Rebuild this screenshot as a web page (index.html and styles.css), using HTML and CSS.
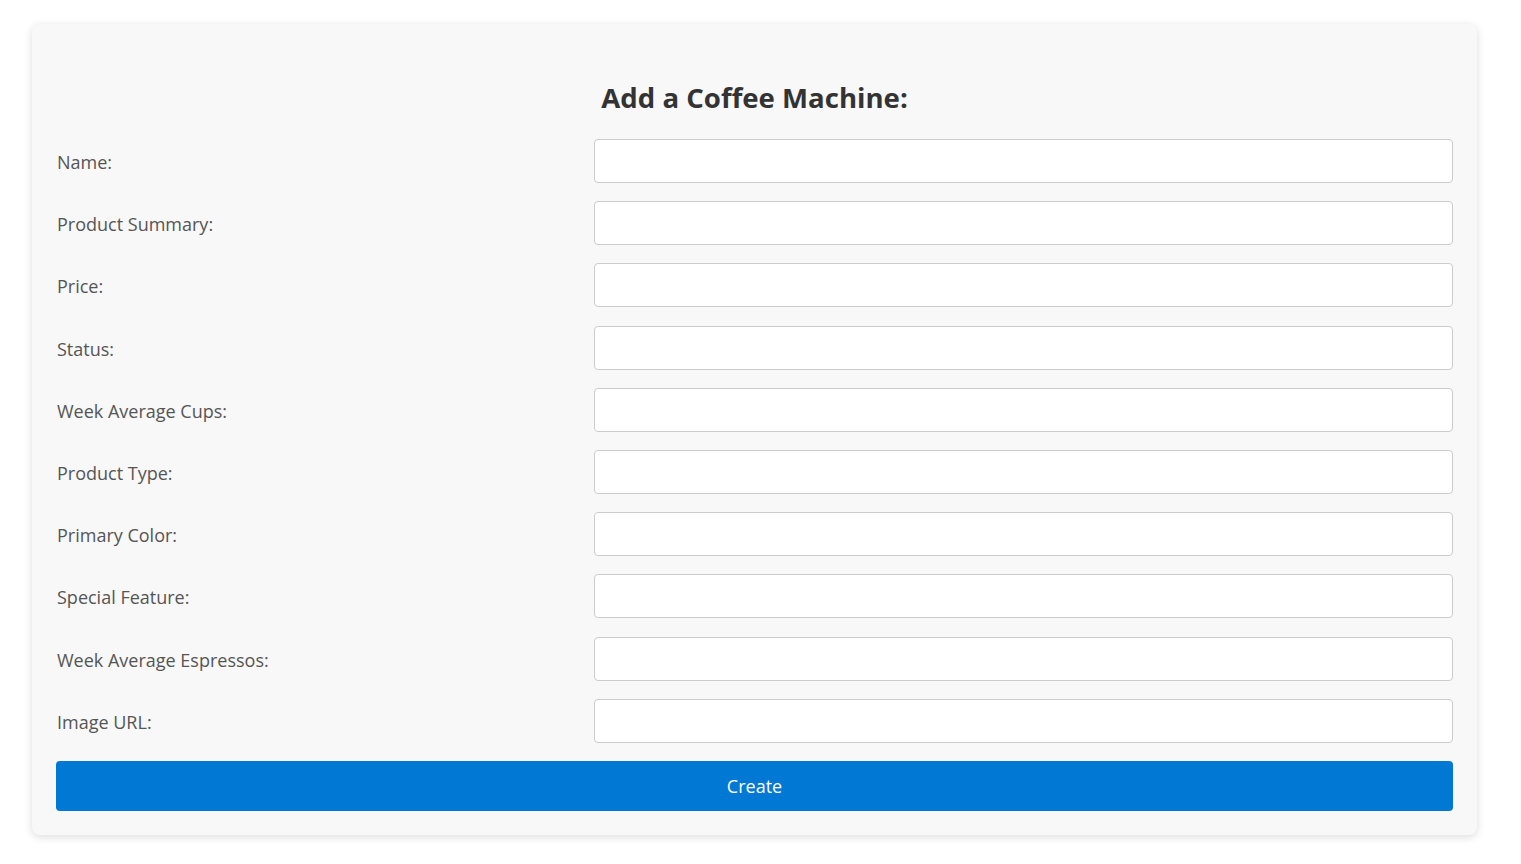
FILE: index.html
```html
<!DOCTYPE html>
<html lang="en">
<head>
<meta charset="utf-8">
<title>Add a Coffee Machine</title>
<link rel="stylesheet" href="styles.css">
</head>
<body>
<div class="page">
  <form class="card">
    <h2 class="title">Add a Coffee Machine:</h2>
    <div class="rows">
      <div class="row"><label class="label">Name:</label><input class="input" type="text"></div>
      <div class="row"><label class="label">Product Summary:</label><input class="input" type="text"></div>
      <div class="row"><label class="label">Price:</label><input class="input" type="text"></div>
      <div class="row"><label class="label">Status:</label><input class="input" type="text"></div>
      <div class="row"><label class="label">Week Average Cups:</label><input class="input" type="text"></div>
      <div class="row"><label class="label">Product Type:</label><input class="input" type="text"></div>
      <div class="row"><label class="label">Primary Color:</label><input class="input" type="text"></div>
      <div class="row"><label class="label">Special Feature:</label><input class="input" type="text"></div>
      <div class="row"><label class="label">Week Average Espressos:</label><input class="input" type="text"></div>
      <div class="row"><label class="label">Image URL:</label><input class="input" type="text"></div>
      <button class="button" type="button">Create</button>
    </div>
  </form>
</div>
</body>
</html>
```
FILE: styles.css
```css
html, body {
  margin: 0;
  padding: 0;
  background: #ffffff;
}
body {
  font-family: "Open Sans", "Noto Sans", sans-serif;
}
.page {
  padding: 24px 44px 30px 32px;
}
.card {
  background: #f8f8f8;
  border-radius: 8px;
  box-shadow: 0 2px 8px rgba(0, 0, 0, 0.14);
  padding: 32px 24px 24px 24px;
  display: flex;
  flex-direction: column;
}
.title {
  margin: 24px 0 25px 0;
  text-align: center;
  font-size: 27.6px;
  line-height: 34px;
  font-weight: 700;
  color: #333333;
}
.rows {
  display: flex;
  flex-direction: column;
  gap: 18.2px;
}
.row {
  display: grid;
  grid-template-columns: 538px 1fr;
  align-items: center;
}
.label {
  font-size: 18px;
  color: #555555;
  padding: 2px 0 0 1px;
}
.input {
  height: 44px;
  box-sizing: border-box;
  border: 1px solid #cccccc;
  border-radius: 4px;
  background: #ffffff;
  font-family: inherit;
  font-size: 16px;
  padding: 0 10px;
}
.button {
  height: 50px;
  border: none;
  border-radius: 4px;
  background: #0078d4;
  color: #ffffff;
  font-family: inherit;
  font-size: 18px;
  padding-top: 2px;
  cursor: pointer;
}
```
